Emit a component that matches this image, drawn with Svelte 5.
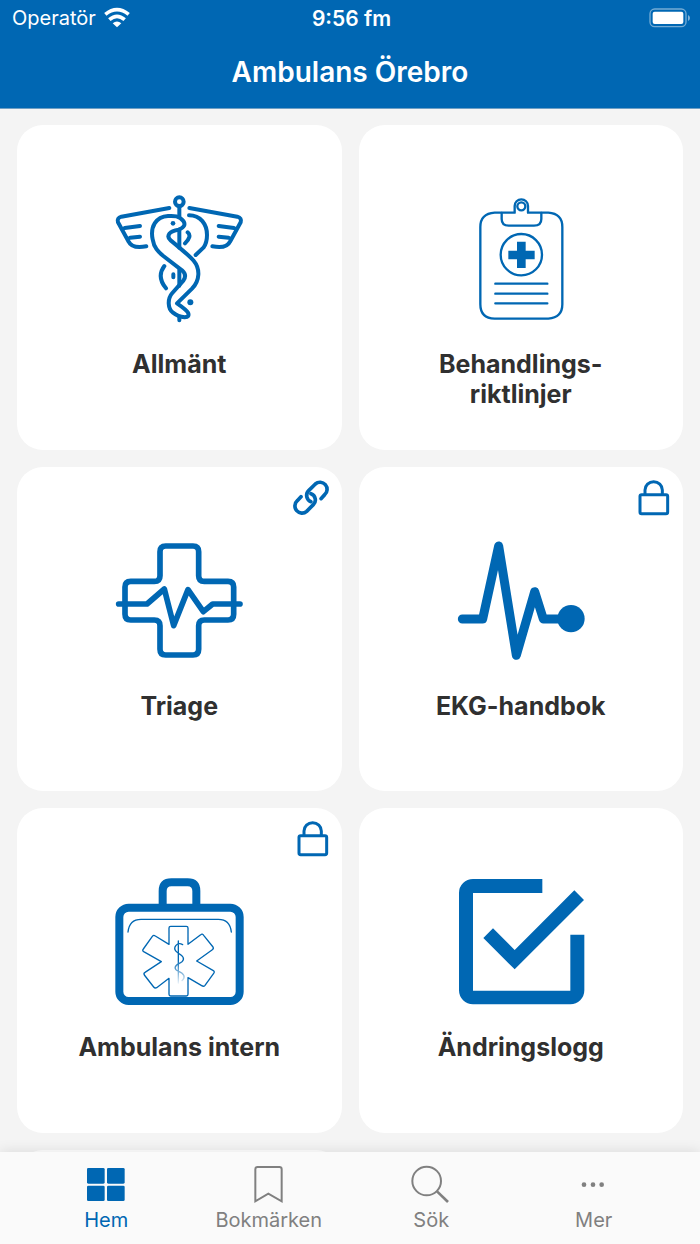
<script lang="ts">
	type Tile = { title: string[]; icon: string; badge?: 'link' | 'lock' };

	const tiles: Tile[] = [
		{ title: ['Allmänt'], icon: 'staff' },
		{ title: ['Behandlings-', 'riktlinjer'], icon: 'clipboard' },
		{ title: ['Triage'], icon: 'cross', badge: 'link' },
		{ title: ['EKG-handbok'], icon: 'ekg', badge: 'lock' },
		{ title: ['Ambulans intern'], icon: 'bag', badge: 'lock' },
		{ title: ['Ändringslogg'], icon: 'check' }
	];

	const tabs = [
		{ id: 'hem', label: 'Hem' },
		{ id: 'bokmarken', label: 'Bokmärken' },
		{ id: 'sok', label: 'Sök' },
		{ id: 'mer', label: 'Mer' }
	];

	let activeTab = $state('hem');
</script>

<div class="app">
	<header>
		<div class="status">
			<span class="carrier">
				Operatör
				<svg class="wifi" viewBox="0 0 78 60" aria-hidden="true">
					<path class="wifi-arc" d="M4 19Q39 -9 74 19M16 35Q39 15 62 35" />
					<path class="solid" d="M26 46Q39 35 52 46L39 58Z" />
				</svg>
			</span>
			<span class="time">9:56 fm</span>
			<svg class="battery" viewBox="0 0 126 60" aria-hidden="true">
				<rect class="shell" x="3" y="3" width="108" height="53" rx="14" />
				<rect class="solid" x="11" y="11" width="92" height="37" rx="6" />
				<path class="nub" d="M117 21Q123 24 123 30T117 39Z" />
			</svg>
		</div>
		<h1>Ambulans Örebro</h1>
	</header>

	<main>
		<div class="grid">
			{#each tiles as tile}
				<a class="tile" href="#{tile.icon}">
					{#if tile.icon === 'staff'}
						<svg class="icon staff" viewBox="31 30 384 384" aria-hidden="true">
							<circle cx="224" cy="50" r="13" />
							<path d="M224 66V94M224 138V188M224 254V302M224 396V406" />
							<path d="M194 69L50 95Q36 99 40 112L72 170Q82 192 125 184M60 129L106 123M76 158L106 155" />
							<path d="M254 69L398 95Q412 99 408 112L376 170Q366 192 323 184M388 129L342 123M372 158L342 155" />
							<path
								d="M190 93C154 95 136 125 144 163C148 188 160 200 176 213L232 256Q248 270 236 287L203 324C187 342 190 372 204 382C214 390 230 396 240 397Q256 396 250 383Q246 375 217 355L262 311C286 286 287 251 267 227Q254 212 198 166Q186 156 195 145Q201 137 222 134Q247 124 236 108C224 92 208 92 190 93Z"
							/>
							<path d="M253 91C288 91 307 118 307 150Q307 173 297 187L273 210" />
							<path d="M249 142Q263 154 241 175M179 243Q155 275 184 310M206 268V277" />
							<circle class="dot" cx="205" cy="115" r="7" />
							<circle class="dot" cx="257" cy="352" r="9" />
						</svg>
					{:else if tile.icon === 'clipboard'}
						<svg class="icon clipboard" viewBox="-25 30 384 384" aria-hidden="true">
							<path d="M148 83H88Q45 86 45 126V358Q45 400 88 401H249Q291 398 291 358V126Q291 86 249 83H188V63A20 20 0 0 0 148 63Z" />
							<path d="M109 84V102Q109 122 130 122H206Q228 122 228 102V84" />
							<circle cx="168" cy="64" r="12" />
							<circle cx="168" cy="209" r="62" />
							<path d="M90 296H246M90 326H246M90 355H246" />
							<path class="dot" d="M155 170H181V197H208V223H181V249H155V223H129V197H155Z" />
						</svg>
					{:else if tile.icon === 'cross'}
						<svg class="icon cross" viewBox="31 20 384 384" aria-hidden="true">
							<path
								d="M183 47H265Q282 47 282 64V136Q282 153 299 153H370Q387 153 387 170V252Q387 269 370 269H299Q282 269 282 286V357Q282 374 265 374H183Q166 374 166 357V286Q166 269 149 269H78Q61 269 61 252V170Q61 153 78 153H149Q166 153 166 136V64Q166 47 183 47Z"
							/>
							<path d="M42 221H127L179 176L207 286L250 178L296 244L324 221H406" />
						</svg>
					{:else if tile.icon === 'ekg'}
						<svg class="icon ekg" viewBox="35 20 384 384" aria-hidden="true">
							<path d="M51 266H112L160 47L213 375L268 184L294 266H370" />
							<circle class="dot" cx="377" cy="265" r="41" />
						</svg>
					{:else if tile.icon === 'bag'}
						<svg class="icon bag" viewBox="31 39 384 384" aria-hidden="true">
							<defs>
								<linearGradient id="snake" gradientUnits="userSpaceOnUse" x1="0" y1="228" x2="0" y2="354">
									<stop offset="0.45" stop-color="#0067b3" />
									<stop offset="1" stop-color="#0067b3" stop-opacity="0.1" />
								</linearGradient>
							</defs>
							<rect class="case" x="44" y="128" width="361" height="280" rx="28" />
							<path class="case" d="M174 122V78Q174 52 200 52H249Q275 52 275 78V122" />
							<path d="M70 201Q74 163 109 163H341Q376 163 380 201" />
							<path
								d="M198 184H245Q250 184 250 189V238L288 209Q293 205 297 211L325 246Q328 251 323 254L276 288L326 317Q331 320 327 325L301 361Q297 366 291 362L250 338V388Q250 393 245 393H198Q193 393 193 388V340L156 368Q151 371 147 366L119 330Q116 325 121 322L170 290L117 260Q112 257 116 252L143 214Q147 209 152 213L193 238V189Q193 184 198 184Z"
							/>
							<path
								class="snake"
								d="M221 228V354M234 239Q222 232 214 241C203 254 218 263 229 270C240 278 239 289 224 295C208 303 207 313 222 319C238 325 244 337 232 347"
							/>
						</svg>
					{:else}
						<svg class="icon" viewBox="35 39 384 384" aria-hidden="true">
							<path
								class="dot"
								d="M291 42H83A42 42 0 0 0 41 84V376A42 42 0 0 0 83 418H375A42 42 0 0 0 417 376V209H375V377H83V84H291Z"
							/>
							<path class="dot" d="M143 190L208 255L387 76L416 105L208 313L114 219Z" />
						</svg>
					{/if}

					<span class="title">
						{#each tile.title as line}
							<span>{line}</span>
						{/each}
					</span>

					{#if tile.badge === 'link'}
						<svg class="badge link" viewBox="40 58 108 108" aria-label="Extern länk" role="img">
							<path d="M121 114L132 102A21 21 0 0 0 104 70L84 90A20 20 0 0 0 91 123" />
							<path d="M61 108L50 120A21 21 0 0 0 78 152L98 132A20 20 0 0 0 91 99" />
						</svg>
					{:else if tile.badge === 'lock'}
						<svg class="badge lock" viewBox="30 58 108 108" aria-label="Låst" role="img">
							<rect x="45" y="102" width="83" height="57" rx="5" />
							<path d="M60 102V88A26 25 0 0 1 112 88V102" />
						</svg>
					{/if}
				</a>
			{/each}
			<div class="tile"></div>
		</div>
	</main>

	<nav>
		{#each tabs as tab}
			<a
				class="tab"
				class:active={activeTab === tab.id}
				href="#{tab.id}"
				onclick={() => (activeTab = tab.id)}
			>
				{#if tab.id === 'hem'}
					<svg viewBox="259 102 120 120" aria-hidden="true">
						<rect class="fill" x="262" y="114" width="53" height="47" rx="4" />
						<rect class="fill" x="322" y="114" width="53" height="47" rx="4" />
						<rect class="fill" x="262" y="167" width="53" height="46" rx="4" />
						<rect class="fill" x="322" y="167" width="53" height="46" rx="4" />
					</svg>
				{:else if tab.id === 'bokmarken'}
					<svg viewBox="746 102 120 120" aria-hidden="true">
						<path d="M765 214V118Q765 111 772 111H837Q844 111 844 118V214L804 191Z" />
					</svg>
				{:else if tab.id === 'sok'}
					<svg viewBox="184 102 120 120" aria-hidden="true">
						<circle cx="231" cy="153" r="43" />
						<path class="handle" d="M262 184L295 216" />
					</svg>
				{:else}
					<svg viewBox="671 102 120 120" aria-hidden="true">
						<circle class="fill" cx="701" cy="164" r="7" />
						<circle class="fill" cx="728" cy="164" r="7" />
						<circle class="fill" cx="754" cy="164" r="7" />
					</svg>
				{/if}
				<span>{tab.label}</span>
			</a>
		{/each}
	</nav>
</div>

<style>
	:global(body) {
		margin: 0;
		background: #f4f4f4;
	}

	.app {
		display: flex;
		flex-direction: column;
		height: 100vh;
		font-family: Inter, 'Liberation Sans', sans-serif;
		color: #303030;
	}

	a {
		color: inherit;
		text-decoration: none;
	}

	svg {
		display: block;
		flex: none;
		overflow: visible;
	}

	/* header */
	header {
		background: #0067b3;
		border-bottom: 1px solid #6f9fc4;
		color: #fff;
	}
	.status {
		display: grid;
		grid-template-columns: 1fr auto 1fr;
		align-items: center;
		height: 36px;
		padding: 0 9px 0 12px;
		font-size: 20px;
	}
	.carrier {
		display: flex;
		align-items: center;
		gap: 8px;
	}
	.time {
		font-size: 21px;
		font-weight: 600;
	}
	.wifi {
		width: 26px;
		height: 20px;
	}
	.wifi-arc {
		fill: none;
		stroke: #fff;
		stroke-width: 11;
	}
	.solid {
		fill: #fff;
	}
	.battery {
		width: 42px;
		height: 20px;
		justify-self: end;
	}
	.shell {
		fill: none;
		stroke: #fff;
		stroke-opacity: 0.45;
		stroke-width: 4;
	}
	.nub {
		fill: #fff;
		fill-opacity: 0.5;
	}
	h1 {
		margin: 0;
		font-size: 28px;
		font-weight: 600;
		line-height: 72px;
		text-align: center;
	}

	/* tiles */
	main {
		flex: 1;
		min-height: 0;
		overflow-y: auto;
		scrollbar-width: none;
	}
	.grid {
		display: grid;
		grid-template-columns: 1fr 1fr;
		gap: 17px;
		padding: 16px 17px;
	}
	.tile {
		position: relative;
		display: flex;
		flex-direction: column;
		align-items: center;
		gap: 26px;
		box-sizing: border-box;
		aspect-ratio: 1;
		padding-top: 70px;
		border-radius: 26px;
		background: #fff;
	}
	.title {
		display: flex;
		flex-direction: column;
		font-size: 25px;
		font-weight: 700;
		line-height: 30px;
		text-align: center;
	}
	.icon {
		width: 128px;
		height: 128px;
		fill: none;
		stroke: #0067b3;
		stroke-linecap: round;
		stroke-linejoin: round;
	}
	.icon .dot {
		fill: #0067b3;
		stroke: none;
	}
	.staff {
		stroke-width: 12;
	}
	.clipboard {
		stroke-width: 7;
	}
	.cross {
		stroke-width: 17;
	}
	.ekg {
		stroke-width: 27;
	}
	.bag {
		stroke-width: 4;
	}
	.bag .case {
		stroke-width: 24;
		stroke-linecap: butt;
	}
	.bag .snake {
		stroke: url(#snake);
	}
	.badge {
		position: absolute;
		top: 13px;
		right: 12px;
		width: 36px;
		height: 36px;
		fill: none;
		stroke: #0067b3;
		stroke-linecap: round;
	}
	.link {
		stroke-width: 11;
	}
	.lock {
		stroke-width: 9;
		stroke-linecap: butt;
	}

	/* tab bar */
	nav {
		position: relative;
		display: flex;
		padding: 12px 25px;
		background: #fafafa;
		box-shadow: 0 -1px 12px rgba(0, 0, 0, 0.1);
	}
	.tab {
		flex: 1;
		display: flex;
		flex-direction: column;
		align-items: center;
		gap: 4px;
		font-size: 20px;
		line-height: 24px;
		color: #808080;
	}
	.tab.active {
		color: #0067b3;
	}
	.tab svg {
		width: 40px;
		height: 40px;
		fill: none;
		stroke: currentColor;
		stroke-width: 6;
	}
	.tab .fill {
		fill: currentColor;
		stroke: none;
	}
	.tab .handle {
		stroke-width: 8;
	}
</style>
